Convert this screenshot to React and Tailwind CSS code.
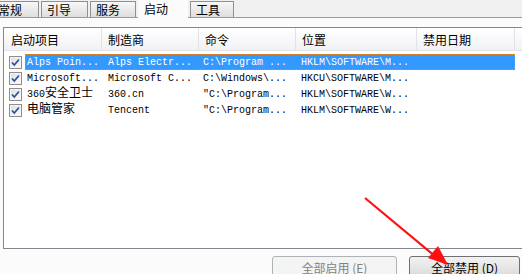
import React from 'react';

const mono = { fontFamily: '"Liberation Mono", "Noto Sans CJK SC", monospace' };

const Check = () => (
  <svg width="13" height="13" viewBox="0 0 13 13" className="shrink-0">
    <defs>
      <linearGradient id="cbg" x1="0" y1="0" x2="1" y2="1">
        <stop offset="0" stopColor="#dcdcdc" />
        <stop offset="1" stopColor="#ffffff" />
      </linearGradient>
    </defs>
    <rect x="0.5" y="0.5" width="12" height="12" fill="url(#cbg)" stroke="#8f8f8f" />
    <rect x="1.5" y="1.5" width="10" height="10" fill="none" stroke="#f4f4f4" />
    <path d="M3 6.5 L5.3 9 L10 3.5" fill="none" stroke="#2a4fa8" strokeWidth="1.8" />
  </svg>
);

const rows = [
  { name: 'Alps Poin...', maker: 'Alps Electr...', cmd: 'C:\\Program ...', loc: 'HKLM\\SOFTWARE\\M...', sel: true },
  { name: 'Microsoft...', maker: 'Microsoft C...', cmd: 'C:\\Windows\\...', loc: 'HKCU\\SOFTWARE\\M...' },
  { name: '360安全卫士', maker: '360.cn', cmd: '"C:\\Program...', loc: 'HKLM\\SOFTWARE\\W...' },
  { name: '电脑管家', maker: 'Tencent', cmd: '"C:\\Program...', loc: 'HKLM\\SOFTWARE\\W...' },
];

const headers = [
  { label: '启动项目', w: 'w-[98px]', pl: 'pl-[7px]' },
  { label: '制造商', w: 'w-[97px]', pl: 'pl-[6px]' },
  { label: '命令', w: 'w-[97px]', pl: 'pl-[6px]' },
  { label: '位置', w: 'w-[121px]', pl: 'pl-[6px]' },
  { label: '禁用日期', w: 'w-[98px]', pl: 'pl-[6px]' },
];

const Tab = ({ label, w, active }) =>
  active ? (
    <div className={`${w} h-[19px] -mb-px bg-[#fbfbfb] flex items-center pl-[6px] text-[12px] text-black`}>
      {label}
    </div>
  ) : (
    <div
      className={`${w} h-[16px] border border-b-0 border-[#8d9096] bg-gradient-to-b from-[#f7f7f7] to-[#dedede] flex items-center pl-[5px] text-[12px] leading-none text-black`}
    >
      {label}
    </div>
  );

export default function App() {
  return (
    <div
      className="relative w-[522px] h-[274px] overflow-hidden bg-[#fbfbfb]"
      style={{ fontFamily: '"Noto Sans CJK SC", "Noto Sans", sans-serif' }}
    >
      {/* tab strip */}
      <div className="h-[18px] bg-[#f0f0f0] border-b border-[#9a9a9a] flex items-end gap-[2px] -ml-[8px]">
        <Tab label="常规" w="w-[47px]" />
        <Tab label="引导" w="w-[47px]" />
        <Tab label="服务" w="w-[46px]" />
        <Tab label="启动" w="w-[50px]" active />
        <Tab label="工具" w="w-[44px]" />
      </div>

      {/* list */}
      <div className="mt-[9px] ml-[3px] h-[222px] border border-r-0 border-[#828790] bg-white">
        <div className="flex h-[23px] bg-gradient-to-b from-white to-[#f0f1f3] border-b border-[#e3e5e8]">
          {headers.map((h) => (
            <div
              key={h.label}
              className={`${h.w} ${h.pl} shrink-0 h-full flex items-center pt-[2px] border-r border-[#dfe2e6] text-[12px] text-black`}
            >
              {h.label}
            </div>
          ))}
          <div className="flex-1" />
        </div>

        <div className="pt-[3px]">
          {rows.map((r) => (
            <div key={r.name} className="flex items-center h-[16px] relative">
              <div className="pl-[5px] w-[21px] shrink-0 flex items-center">
                <Check />
              </div>
              <div
                className={`flex items-center h-[16px] w-[490px] ${
                  r.sel ? 'bg-[#3399ff] text-white outline-1 outline-dotted outline-[#e08a30] -outline-offset-1' : 'text-black'
                }`}
              >
                <div className="w-[77px] pl-[2px] shrink-0 text-[10px] whitespace-nowrap" style={mono}>
                  {/[\u4e00-\u9fff]/.test(r.name) ? (
                    <span>
                      {r.name.replace(/[\u4e00-\u9fff]+/, '')}
                      <span className="text-[12px]">{r.name.match(/[\u4e00-\u9fff]+/)[0]}</span>
                    </span>
                  ) : (
                    r.name
                  )}
                </div>
                <div className="w-[96px] pl-[6px] shrink-0 text-[10px] whitespace-nowrap" style={mono}>
                  {r.maker}
                </div>
                <div className="w-[98px] pl-[5px] shrink-0 text-[10px] whitespace-nowrap" style={mono}>
                  {r.cmd}
                </div>
                <div className="pl-[5px] shrink-0 text-[10px] whitespace-nowrap" style={mono}>
                  {r.loc}
                </div>
              </div>
            </div>
          ))}
        </div>
      </div>

      {/* buttons */}
      <div className="flex mt-[7px] pl-[272px] gap-[12px]">
        <button className="w-[125px] h-[23px] rounded-[3px] border border-[#adb2b5] bg-[#f4f4f4] text-[12px] text-[#838383] flex items-center justify-center">
          全部启用 (E)
        </button>
        <button className="w-[111px] h-[23px] rounded-[3px] border border-[#707070] bg-gradient-to-b from-[#f2f2f2] to-[#d9d9d9] text-[12px] text-black flex items-center justify-center">
          全部禁用 (D)
        </button>
      </div>

      {/* red arrow annotation */}
      <svg className="absolute left-0 top-0 pointer-events-none" width="522" height="274">
        <line x1="365" y1="198" x2="436" y2="257" stroke="#ff1010" strokeWidth="2.2" />
        <polygon points="448,265 428,258 438,246" fill="#ff1010" />
      </svg>
    </div>
  );
}
